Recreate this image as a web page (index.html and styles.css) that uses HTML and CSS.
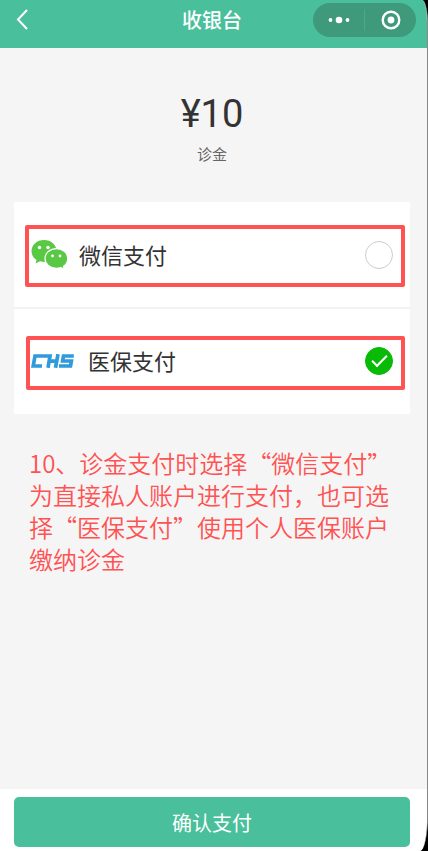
FILE: index.html
```html
<!DOCTYPE html>
<html lang="zh-CN">
<head>
    <meta charset="UTF-8">
    <meta name="viewport" content="width=device-width, initial-scale=1.0">
    <title>收银台</title>
    <link rel="stylesheet" href="styles.css">
</head>
<body>
    <form class="screen">
        <header class="navbar">
            <button class="back" type="button" aria-label="返回">
                <svg width="12" height="22" viewBox="0 0 12 22" fill="none" stroke="#fff" stroke-width="2"><path d="M11 1 L2 10.500 L11 20"/></svg>
            </button>
            <h1 class="title">收银台</h1>
            <div class="capsule">
                <button class="capsule-btn" type="button" aria-label="更多">
                    <svg width="22" height="8" viewBox="0 0 22 8" fill="#fff"><circle cx="2.500" cy="4" r="1.900"/><circle cx="11" cy="4" r="3.300"/><circle cx="19.500" cy="4" r="1.900"/></svg>
                </button>
                <button class="capsule-btn" type="button" aria-label="关闭">
                    <svg width="20" height="20" viewBox="0 0 20 20"><circle cx="10" cy="10" r="8.300" fill="none" stroke="#fff" stroke-width="2.400"/><circle cx="10" cy="10" r="3.400" fill="#fff"/></svg>
                </button>
            </div>
        </header>

        <main class="content">
            <div class="amount">¥10</div>
            <div class="amount-label">诊金</div>

            <div class="methods">
                <div class="method">
                    <label class="option option-wechat">
                        <svg class="logo" width="37" height="30" viewBox="0 0 37 30">
                            <path fill="#58c845" d="M13 0 C6 0 0.500 4.800 0.500 11 C0.500 14.800 2.500 18 5.500 20 L4.500 23.500 L9 21.300 C10.500 21.700 12 22 13.500 22 C20 22 25.500 17 25.500 11 C25.500 4.800 20 0 13 0 Z"/>
                            <path fill="#58c845" stroke="#fff" stroke-width="1.200" d="M25.500 8.700 C19 8.700 14 13 14 18.500 C14 24 19 28.300 25.500 28.300 C27 28.300 28.500 28 30 27.600 L33.300 29.400 L32.500 26.300 C35.300 24.500 36.700 22 36.700 18.500 C36.700 13 32 8.700 25.500 8.700 Z"/>
                            <g fill="#fff"><circle cx="8.500" cy="7.500" r="1.700"/><circle cx="17" cy="7.500" r="1.700"/><circle cx="21.500" cy="16" r="1.400"/><circle cx="29" cy="16" r="1.400"/></g>
                        </svg>
                        <span class="name">微信支付</span>
                        <input class="radio" type="radio" name="pay" value="wechat">
                    </label>
                </div>
                <div class="method">
                    <label class="option option-chs">
                        <svg class="logo" width="43" height="14" viewBox="0 0 43 14" fill="none" stroke="#2f9bdc" stroke-width="3.700">
                            <path d="M11 12 H2.200 L4 2 H19 L17 13.800"/>
                            <path d="M17.500 7.200 H26 M27 0.200 L24.500 13.800"/>
                            <path d="M42.800 2 H32.500 L31.600 7 H40.400 L39.500 12 H28"/>
                        </svg>
                        <span class="name">医保支付</span>
                        <input class="radio" type="radio" name="pay" value="chs" checked>
                    </label>
                </div>
            </div>

            <p class="note">10、诊金支付时选择“微信支付”为直接私人账户进行支付，也可选择“医保支付”使用个人医保账户缴纳诊金</p>
        </main>

        <footer class="footer">
            <button class="confirm" type="submit">确认支付</button>
        </footer>
    </form>
</body>
</html>
```
FILE: styles.css
```css
* { box-sizing: border-box; }
body { margin: 0; background: #000; font-family: "Noto Sans CJK SC", sans-serif; color: #333; }
button { border: none; padding: 0; background: none; font-family: inherit; cursor: pointer; }
svg { display: block; }
.screen { display: flex; flex-direction: column; min-height: 100vh; background: #f5f5f5; border-right: 1px solid #888; border-radius: 0 6px 8px 0 / 0 24px 36px 0; overflow: hidden; }

.navbar { display: grid; grid-template-columns: 1fr auto 1fr; align-items: center; height: 48px; padding: 0 11px 8px 8px; background: #4abf9b; }
.back { justify-self: start; padding-left: 8px; }
.title { margin: 0; font-size: 20px; line-height: 32px; font-weight: 500; color: #fff; }
.capsule { justify-self: end; display: flex; align-items: center; width: 103px; height: 34px; border-radius: 17px; background: #3f9a7c; }
.capsule-btn { flex: 1; height: 22px; display: flex; align-items: center; justify-content: center; }
.capsule-btn + .capsule-btn { border-left: 1px solid #4ba88a; }

.content { flex: 1; padding: 42px 17px 0 14px; }
.amount { font-family: Roboto, "Noto Sans CJK SC", sans-serif; font-size: 38px; line-height: 48px; text-align: center; }
.amount-label { margin-top: 4px; font-size: 15px; line-height: 24px; text-align: center; color: #666; }

.methods { margin-top: 36px; background: #fff; }
.method { padding: 23px 5px 20px 11px; }
.method + .method { padding: 27px 5px 24px 12px; border-top: 2px solid #f2f2f2; }
.option { display: flex; align-items: center; border: 4px solid #ff5252; border-radius: 2px; padding: 0 8px 2px 2px; cursor: pointer; }
.option-wechat { height: 62px; gap: 11px; }
.option-chs { height: 54px; gap: 14px; padding: 0 8px 4px 1px; }
.name { flex: 1; padding-bottom: 2px; font-size: 22px; line-height: 32px; }
.radio { appearance: none; display: flex; align-items: center; justify-content: center; width: 28px; height: 28px; margin: 0; border: 1px solid #ccc; border-radius: 50%; }
.radio:checked { border-color: #09bb07; background: #09bb07; }
.radio:checked::before { content: ""; width: 13px; height: 6px; margin-bottom: 4px; border: solid #fff; border-width: 0 0 2px 2px; transform: rotate(-45deg); }

.note { margin: 33px 6px 24px 15px; font-size: 24px; line-height: 32px; font-weight: 350; color: #ff5252; }

.footer { padding: 8px 17px 4px 14px; background: #fff; }
.confirm { display: block; width: 100%; height: 50px; border-radius: 5px; background: #4abf9b; font-size: 20px; color: #fff; }
```
